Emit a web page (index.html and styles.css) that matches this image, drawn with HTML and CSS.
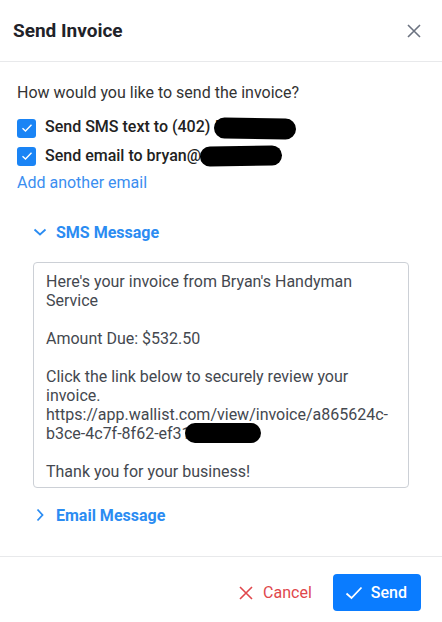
FILE: index.html
```html
<!DOCTYPE html>
<html lang="en">
<head>
<meta charset="UTF-8">
<meta name="viewport" content="width=device-width, initial-scale=1.0">
<title>Send Invoice</title>
<link rel="stylesheet" href="styles.css">
</head>
<body>
    <div class="dialog">
        <div class="dialog-header">
            <h2>Send Invoice</h2>
            <button class="close-btn" aria-label="Close">
                <svg width="14" height="14" viewBox="0 0 14 14"><path d="M1 1L13 13M13 1L1 13" stroke="#6b7280" stroke-width="1.6" fill="none"/></svg>
            </button>
        </div>

        <div class="dialog-body">
            <p class="question">How would you like to send the invoice?</p>

            <label class="check-row">
                <span class="checkbox">
                    <svg width="12" height="10" viewBox="0 0 12 10"><path d="M1.5 5.2L4.5 8L10.5 1.8" stroke="#fff" stroke-width="1.4" fill="none"/></svg>
                </span>
                <span class="check-label">Send SMS text to (402) 5<span class="redact redact-phone"></span></span>
            </label>
            <label class="check-row">
                <span class="checkbox">
                    <svg width="12" height="10" viewBox="0 0 12 10"><path d="M1.5 5.2L4.5 8L10.5 1.8" stroke="#fff" stroke-width="1.4" fill="none"/></svg>
                </span>
                <span class="check-label">Send email to bryan@<span class="redact redact-email"></span></span>
            </label>
            <a class="add-link" href="#">Add another email</a>

            <div class="section">
                <div class="section-title">
                    <svg width="14" height="14" viewBox="0 0 14 14"><path d="M1.5 4.5L7 9.5L12.5 4.5" stroke="#2b8cf2" stroke-width="1.8" fill="none"/></svg>
                    <span>SMS Message</span>
                </div>
                <div class="message-box">
                    <p>Here's your invoice from Bryan's Handyman Service</p>
                    <p>Amount Due: $532.50</p>
                    <p>Click the link below to securely review your invoice.<br>https://app.wallist.com/view/invoice/a865624c-b3ce-4c7f-8f62-ef31<span class="redact redact-link"></span></p>
                    <p>Thank you for your business!</p>
                </div>
            </div>

            <div class="section section-closed">
                <div class="section-title">
                    <svg width="14" height="14" viewBox="0 0 14 14"><path d="M4.5 1.5L9.5 7L4.5 12.5" stroke="#2b8cf2" stroke-width="1.8" fill="none"/></svg>
                    <span>Email Message</span>
                </div>
            </div>
        </div>

        <div class="dialog-footer">
            <button class="cancel-btn">
                <svg width="14" height="14" viewBox="0 0 14 14"><path d="M1 1L13 13M13 1L1 13" stroke="#e0474c" stroke-width="1.6" fill="none"/></svg>
                Cancel
            </button>
            <button class="send-btn">
                <svg width="18" height="14" viewBox="0 0 18 14"><path d="M1.5 7.5L6.5 12L16.5 1.5" stroke="#fff" stroke-width="1.8" fill="none"/></svg>
                Send
            </button>
        </div>
    </div>
</body>
</html>
```

FILE: styles.css
```css
body {
    margin: 0;
    font-family: Roboto, "Noto Sans", sans-serif;
    color: #333;
    background-color: #fff;
}

.dialog {
    width: 442px;
    height: 622px;
    background-color: #fff;
}

.dialog-header {
    height: 61px;
    display: flex;
    align-items: center;
    justify-content: space-between;
    padding: 0 21px 0 13px;
    border-bottom: 1px solid #e8e9eb;
}

.dialog-header h2 {
    margin: 0;
    font-size: 19px;
    font-weight: 700;
    color: #1f2329;
}

.close-btn {
    border: none;
    background: none;
    padding: 0;
    cursor: pointer;
    display: flex;
}

.dialog-body {
    padding: 21px 17px 0;
    height: 473px;
    border-bottom: 1px solid #e8e9eb;
}

.question {
    margin: 0 0 11px;
    font-size: 16px;
    line-height: 20px;
}

.check-row {
    display: flex;
    align-items: center;
    gap: 9px;
    height: 28px;
    font-size: 16px;
    font-weight: 500;
    color: #222;
}

.checkbox {
    width: 19px;
    height: 19px;
    border-radius: 3px;
    background-color: #1a84f5;
    display: flex;
    align-items: center;
    justify-content: center;
}

.check-label {
    white-space: nowrap;
}

.redact {
    display: inline-block;
    background-color: #000;
    border-radius: 12px;
    vertical-align: middle;
}

.redact-phone {
    width: 82px;
    height: 21px;
    margin-left: -9px;
    transform: rotate(1deg);
}

.redact-email {
    width: 82px;
    height: 20px;
    margin-left: -1px;
    transform: rotate(-1deg);
}

.redact-link {
    width: 76px;
    height: 20px;
    margin-left: -6px;
    margin-top: -4px;
}

.add-link {
    display: block;
    margin-top: 3px;
    font-size: 16px;
    line-height: 20px;
    color: #3a8ef0;
    text-decoration: none;
}

.section {
    padding-left: 16px;
}

.section-title {
    display: flex;
    align-items: center;
    gap: 9px;
    height: 20px;
    margin: 29px 0 20px;
    font-size: 16px;
    font-weight: 700;
    color: #2b8cf2;
}

.message-box {
    width: 376px;
    box-sizing: border-box;
    border: 1px solid #ccd0d6;
    border-radius: 4px;
    padding: 9px 12px 6px;
    font-size: 16px;
    line-height: 19px;
    color: #44484f;
}

.message-box p {
    margin: 0 0 19px;
}

.message-box p:last-child {
    margin-bottom: 0;
}

.section-closed .section-title {
    margin-top: 17px;
}

.dialog-footer {
    display: flex;
    justify-content: flex-end;
    align-items: center;
    gap: 21px;
    padding: 17px 21px 0;
}

.cancel-btn, .send-btn {
    font-family: inherit;
    font-size: 16px;
    border: none;
    display: flex;
    align-items: center;
    cursor: pointer;
}

.cancel-btn {
    background: none;
    color: #e0474c;
    gap: 10px;
    padding: 0;
}

.send-btn {
    background-color: #0a7cff;
    color: #fff;
    font-weight: 500;
    height: 37px;
    padding: 0 14px 0 12px;
    border-radius: 4px;
    gap: 8px;
}
```
